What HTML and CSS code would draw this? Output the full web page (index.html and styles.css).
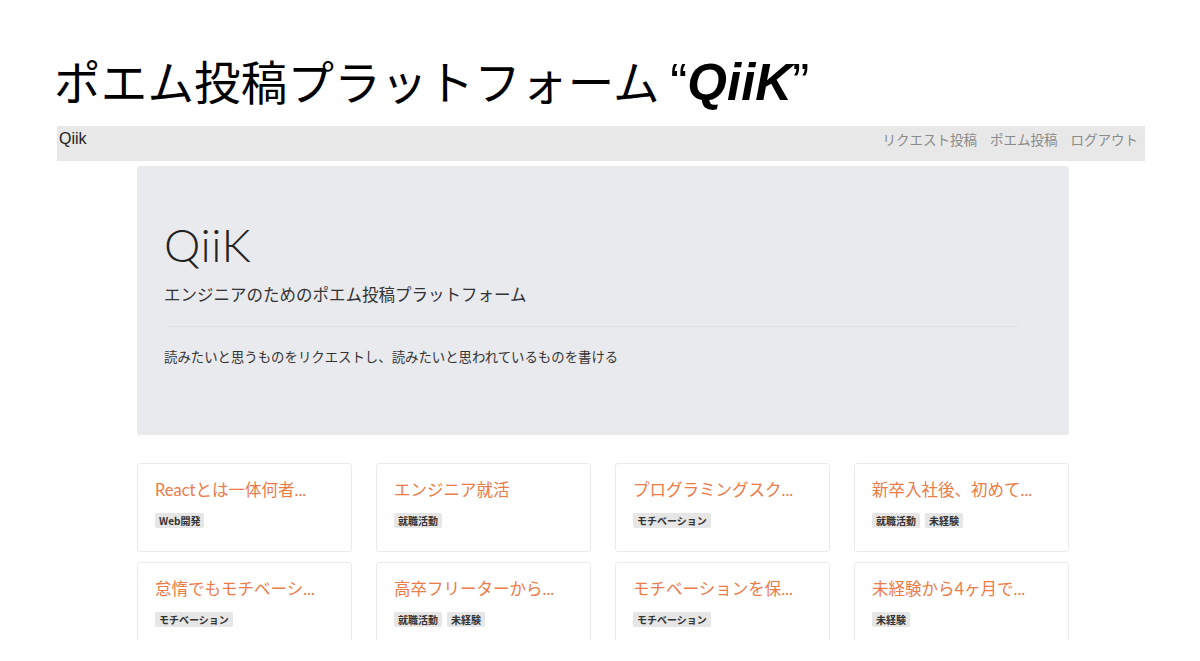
FILE: index.html
```html
<!DOCTYPE html>
<html lang="ja">
<head>
<meta charset="utf-8">
<title>QiiK</title>
<link rel="stylesheet" href="styles.css">
</head>
<body>
<h1 class="slide-title">ポエム投稿プラットフォーム <span class="latin">“<b><i>QiiK</i></b>”</span></h1>
<div class="screen">
<nav class="navbar">
  <span class="brand">Qiik</span>
  <div class="nav-links">
    <a>リクエスト投稿</a>
    <a>ポエム投稿</a>
    <a>ログアウト</a>
  </div>
</nav>
<main class="container">
  <section class="jumbotron">
    <div class="logo">QiiK</div>
    <p class="lead">エンジニアのためのポエム投稿プラットフォーム</p>
    <hr class="divider">
    <p class="desc">読みたいと思うものをリクエストし、読みたいと思われているものを書ける</p>
  </section>
  <section class="cards">
    <div class="card"><div class="card-title">Reactとは一体何者...</div><div class="tags"><span class="tag">Web開発</span></div></div>
    <div class="card"><div class="card-title">エンジニア就活</div><div class="tags"><span class="tag">就職活動</span></div></div>
    <div class="card"><div class="card-title">プログラミングスク...</div><div class="tags"><span class="tag">モチベーション</span></div></div>
    <div class="card"><div class="card-title">新卒入社後、初めて...</div><div class="tags"><span class="tag">就職活動</span><span class="tag">未経験</span></div></div>
    <div class="card"><div class="card-title">怠惰でもモチベーシ...</div><div class="tags"><span class="tag">モチベーション</span></div></div>
    <div class="card"><div class="card-title">高卒フリーターから...</div><div class="tags"><span class="tag">就職活動</span><span class="tag">未経験</span></div></div>
    <div class="card"><div class="card-title">モチベーションを保...</div><div class="tags"><span class="tag">モチベーション</span></div></div>
    <div class="card"><div class="card-title">未経験から4ヶ月で...</div><div class="tags"><span class="tag">未経験</span></div></div>
  </section>
</main>
</div>
</body>
</html>
```
FILE: styles.css
```css
html, body {
  margin: 0;
  padding: 0;
  background: #ffffff;
  height: 661px;
  overflow: hidden;
}
body {
  font-family: "Liberation Sans", "Noto Sans CJK JP", sans-serif;
  color: #222;
}
.slide-title {
  margin: 0;
  padding: 54px 0 0 54px;
  height: 72px;
  box-sizing: content-box;
  font-family: "Noto Sans CJK JP", sans-serif;
  font-weight: 400;
  font-size: 46.5px;
  line-height: 52px;
  color: #000;
  letter-spacing: 0.2px;
}
.slide-title .latin {
  font-family: "Liberation Sans", sans-serif;
  font-size: 51px;
  letter-spacing: 0;
}
.screen {
  height: 514px;
  overflow: hidden;
}
.navbar {
  margin: 0 55px 0 57px;
  height: 35px;
  background: #e8e8e8;
  display: flex;
  align-items: center;
  justify-content: space-between;
  padding: 0 7px 0 2px;
  box-sizing: border-box;
}
.brand {
  font-family: "Liberation Sans", sans-serif;
  font-size: 16px;
  color: #222;
  margin-top: -10px;
}
.nav-links {
  display: flex;
  gap: 13px;
  margin-top: -10px;
}
.nav-links a {
  font-family: "Noto Sans CJK JP", sans-serif;
  font-size: 13.5px;
  color: #8a8a8a;
}
.container {
  width: 932px;
  margin: 5px auto 0;
  padding-left: 6px;
}
.jumbotron {
  background: #e9eaee;
  border-radius: 3px;
  height: 269px;
  box-sizing: border-box;
  padding: 51px 27px 0;
}
.logo {
  font-family: "Lato", sans-serif;
  font-weight: 300;
  font-size: 46px;
  line-height: 56px;
  color: #222;
  letter-spacing: 0.5px;
}
.lead {
  margin: 9px 0 0;
  font-family: "Noto Sans CJK JP", sans-serif;
  font-size: 16.5px;
  line-height: 24px;
  color: #333;
}
.divider {
  margin: 20px 24px 0 4px;
  border: 0;
  border-top: 1px solid #dfe0e4;
}
.desc {
  margin: 19px 0 0;
  font-family: "Noto Sans CJK JP", sans-serif;
  font-size: 13.4px;
  line-height: 20px;
  color: #333;
}
.cards {
  display: grid;
  grid-template-columns: repeat(4, 215px);
  column-gap: 24px;
  row-gap: 10px;
  margin-top: 28px;
}
.card {
  height: 89px;
  box-sizing: border-box;
  border: 1px solid #ebebeb;
  border-radius: 3px;
  padding: 15px 17px 0;
  background: #fff;
}
.card-title {
  font-family: "Lato", "Noto Sans CJK JP", sans-serif;
  font-size: 16.5px;
  line-height: 22px;
  color: #ec7b47;
  white-space: nowrap;
}
.tags {
  display: flex;
  gap: 5px;
  margin-top: 12px;
}
.tag {
  font-family: "Noto Sans CJK JP", sans-serif;
  font-size: 10px;
  font-weight: 700;
  line-height: 15px;
  background: #e6e6e6;
  color: #333;
  padding: 0 4px;
  border-radius: 2px;
}
```
